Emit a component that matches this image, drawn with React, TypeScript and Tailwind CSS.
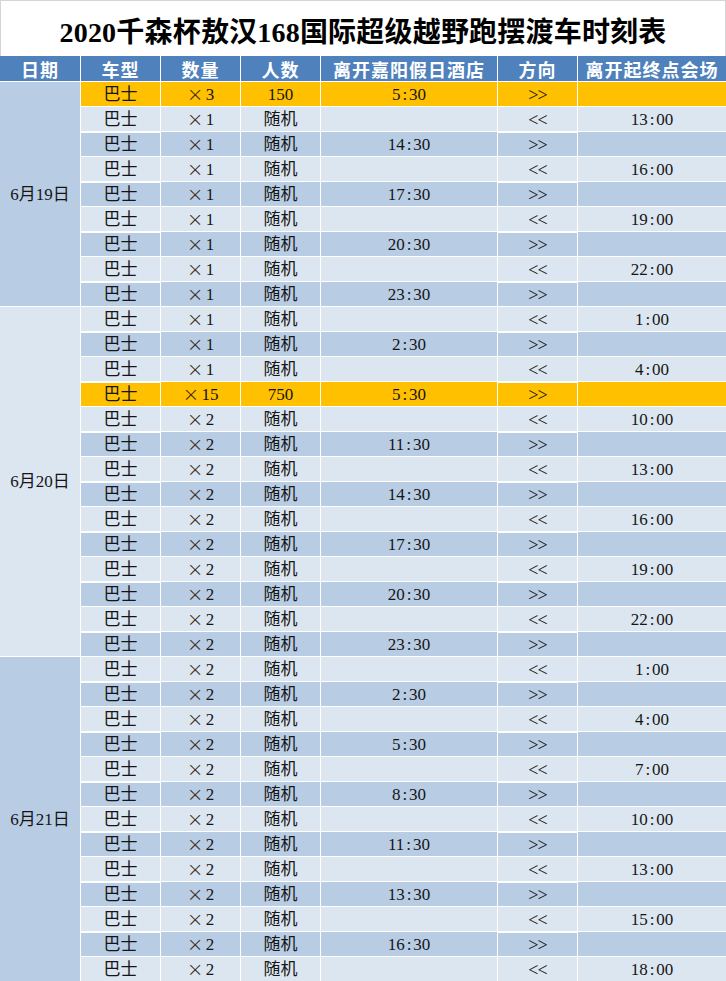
import React from "react";

type Row = {
  qty: string;
  people: string;
  hotel: string;
  dir: ">>" | "<<";
  venue: string;
};

interface DayGroup {
  date: string;
  span: string;
  shade: string;
  rows: Row[];
}

const out = (qty: string, people: string, hotel: string): Row => ({ qty, people, hotel, dir: ">>", venue: "" });
const back = (qty: string, venue: string): Row => ({ qty, people: "随机", hotel: "", dir: "<<", venue });

const DAYS: DayGroup[] = [
  {
    date: "6月19日",
    span: "row-span-9",
    shade: "bg-[#b8cce4]",
    rows: [
      out("3", "150", "5:30"),
      back("1", "13:00"),
      out("1", "随机", "14:30"),
      back("1", "16:00"),
      out("1", "随机", "17:30"),
      back("1", "19:00"),
      out("1", "随机", "20:30"),
      back("1", "22:00"),
      out("1", "随机", "23:30"),
    ],
  },
  {
    date: "6月20日",
    span: "row-span-14",
    shade: "bg-[#dce6f1]",
    rows: [
      back("1", "1:00"),
      out("1", "随机", "2:30"),
      back("1", "4:00"),
      out("15", "750", "5:30"),
      back("2", "10:00"),
      out("2", "随机", "11:30"),
      back("2", "13:00"),
      out("2", "随机", "14:30"),
      back("2", "16:00"),
      out("2", "随机", "17:30"),
      back("2", "19:00"),
      out("2", "随机", "20:30"),
      back("2", "22:00"),
      out("2", "随机", "23:30"),
    ],
  },
  {
    date: "6月21日",
    span: "row-span-13",
    shade: "bg-[#b8cce4]",
    rows: [
      back("2", "1:00"),
      out("2", "随机", "2:30"),
      back("2", "4:00"),
      out("2", "随机", "5:30"),
      back("2", "7:00"),
      out("2", "随机", "8:30"),
      back("2", "10:00"),
      out("2", "随机", "11:30"),
      back("2", "13:00"),
      out("2", "随机", "13:30"),
      back("2", "15:00"),
      out("2", "随机", "16:30"),
      back("2", "18:00"),
    ],
  },
];

const HEADERS = ["日期", "车型", "数量", "人数", "离开嘉阳假日酒店", "方向", "离开起终点会场"];

// row 0 and row 12 are the big departures, highlighted orange
const HIGHLIGHT = new Set([0, 12]);

function Time({ value }: { value: string }) {
  if (!value) return null;
  const [h, m] = value.split(":");
  return (
    <span>
      {h}
      <span className="mx-[2px]">:</span>
      {m}
    </span>
  );
}

function Cell({ bg, thick, children }: { bg: string; thick?: boolean; children?: React.ReactNode }) {
  return (
    <div
      className={`${bg} flex items-center justify-center ${thick ? "relative z-[1] shadow-[0_2px_0_#ffffff]" : ""}`}
    >
      {children}
    </div>
  );
}

export default function App() {
  let idx = 0;

  return (
    <div className="w-[726px] bg-white font-['Liberation_Serif','Noto_Sans_CJK_SC',serif] text-[17px] leading-none text-[#151515]">
      {/* Title */}
      <div className="h-[56px] border-x border-t border-[#d4d4d4] flex items-center justify-center pt-[8px]">
        <h1 className="text-[28px] font-bold text-black tracking-[0.2px]">
          2020千森杯敖汉168国际超级越野跑摆渡车时刻表
        </h1>
      </div>

      <div className="grid grid-cols-[80px_79px_79px_79px_176px_79px_148px] grid-rows-[25px] auto-rows-[24px] gap-px bg-white">
        {HEADERS.map((h) => (
          <div
            key={h}
            className="bg-[#4f81bd] flex items-center justify-center text-white font-bold text-[18px] tracking-[1px] font-['Noto_Sans_CJK_SC',sans-serif]"
          >
            {h}
          </div>
        ))}

        {DAYS.map((day) => (
          <React.Fragment key={day.date}>
            <div className={`${day.span} ${day.shade} flex items-center justify-center`}>
              <span>
                6<span>月</span>
                {day.date.slice(2, 4)}
                <span>日</span>
              </span>
            </div>
            {day.rows.map((r) => {
              const i = idx++;
              const bg = HIGHLIGHT.has(i) ? "bg-[#ffc000]" : i % 2 === 1 ? "bg-[#dce6f1]" : "bg-[#b8cce4]";
              const thick = !HIGHLIGHT.has(i) && i % 2 === 1;
              return (
                <React.Fragment key={i}>
                  <Cell bg={bg} thick={thick}>巴士</Cell>
                  <Cell bg={bg}>
                    <span className="flex items-center">
                      <span className="font-['DejaVu_Sans',sans-serif] font-extralight text-[20px] leading-none mr-[2px] text-[#3a2510]">
                        ×
                      </span>
                      {r.qty}
                    </span>
                  </Cell>
                  <Cell bg={bg}>{r.people}</Cell>
                  <Cell bg={bg}>
                    <Time value={r.hotel} />
                  </Cell>
                  <Cell bg={bg} thick={thick}>
                    <span className="text-[18px] font-light scale-y-110 tracking-[-1px]">{r.dir}</span>
                  </Cell>
                  <Cell bg={bg}>
                    <Time value={r.venue} />
                  </Cell>
                </React.Fragment>
              );
            })}
          </React.Fragment>
        ))}
      </div>
    </div>
  );
}
